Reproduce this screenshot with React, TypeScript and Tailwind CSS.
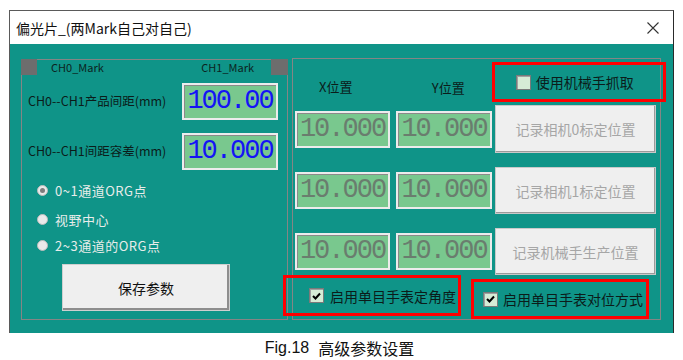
import React from 'react';

const cjk = "font-['Noto_Sans_CJK_SC',sans-serif]";

function NumBox({ value, blue, w }: { value: string; blue?: boolean; w: string }) {
  return (
    <div
      className={`${w} h-[37px] bg-[#79c88e] border-2 border-[#ececec] shadow-[inset_1px_1px_0_#8a8a8a] flex items-center justify-center overflow-hidden font-['Liberation_Mono',monospace] text-[27px] tracking-[-2px] leading-none ${
        blue ? 'text-[#1414f5]' : 'text-[#6a7d6e]'
      }`}
    >
      {value}
    </div>
  );
}

function Radio({ checked, label }: { checked?: boolean; label: string }) {
  return (
    <div className="flex items-center h-[20px] pl-[15px] gap-[7px]">
      <div className="w-[11px] h-[11px] rounded-full bg-[#e9e9e9] border border-[#bdbdbd] flex items-center justify-center">
        {checked && <div className="w-[5px] h-[5px] rounded-full bg-[#7d7d7d]" />}
      </div>
      <span className="text-[13px] leading-none text-[#e8ecea] tracking-[0.5px] whitespace-nowrap">{label}</span>
    </div>
  );
}

function Check({ checked }: { checked?: boolean }) {
  return (
    <div className="shrink-0 w-[15px] h-[15px] bg-[#d6ecd6] border border-[#7a7a7a] shadow-[inset_1px_1px_0_#a0a0a0] flex items-center justify-center">
      {checked && (
        <svg width="9" height="8" viewBox="0 0 9 8">
          <path d="M1 4 L3.5 6.5 L8 1.5" stroke="#000" strokeWidth="2" fill="none" />
        </svg>
      )}
    </div>
  );
}

function GrayButton({ label }: { label: string }) {
  return (
    <div className="w-[161px] h-full bg-[#efefef] border border-[#c9c9c9] shadow-[inset_-1px_-1px_0_#9a9a9a] flex items-center justify-center text-[14px] leading-none text-[#a6a6a6] whitespace-nowrap">
      {label}
    </div>
  );
}

export default function App() {
  return (
    <div className={`w-[683px] h-[360px] bg-white overflow-hidden ${cjk}`}>
      <div className="ml-[9px] mt-[10px] w-[665px] border-x border-t border-[#5a5a5a] border-r-[#2a2a2a]">
        {/* title bar */}
        <div className="h-[33px] bg-white flex items-center justify-between pl-[6px] pr-[14px]">
          <span className="text-[14px] leading-none text-[#111]">偏光片_(两Mark自己对自己)</span>
          <svg width="12" height="12" viewBox="0 0 12 12">
            <path d="M0.5 0.5 L11.5 11.5 M11.5 0.5 L0.5 11.5" stroke="#333" strokeWidth="1.1" />
          </svg>
        </div>

        {/* body */}
        <div className="h-[289px] bg-[#0f9488] flex items-start pl-[11px] pt-[14px] gap-[4px]">
          {/* left group */}
          <div className="mt-[1px] w-[267px] h-[261px] border border-[#858585] flex flex-col">
            <div className="flex items-center h-[16px] -mt-px -mx-px">
              <div className="w-[16px] h-[16px] bg-[#6d6d6d]" />
              <span className="ml-[14px] text-[11px] leading-none text-[#0c2320]">CH0_Mark</span>
              <div className="flex-1" />
              <span className="mr-[17px] text-[11px] leading-none text-[#0c2320]">CH1_Mark</span>
              <div className="w-[17px] h-[16px] bg-[#6d6d6d]" />
            </div>

            <div className="mt-[8px] flex items-center justify-between pl-[6px] pr-[9px]">
              <span className="text-[12.5px] leading-none text-[#0b1c1a] whitespace-nowrap">CH0--CH1产品间距(mm)</span>
              <NumBox value="100.00" blue w="w-[96px]" />
            </div>
            <div className="mt-[13px] flex items-center justify-between pl-[6px] pr-[9px]">
              <span className="text-[12.5px] leading-none text-[#0b1c1a] whitespace-nowrap">CH0--CH1间距容差(mm)</span>
              <NumBox value="10.000" blue w="w-[96px]" />
            </div>

            <div className="mt-[10px] flex flex-col">
              <Radio checked label="0~1通道ORG点" />
              <div className="h-[9px]" />
              <Radio label="视野中心" />
              <div className="h-[6px]" />
              <Radio label="2~3通道的ORG点" />
            </div>

            <div className="mt-[9px] ml-[40px] w-[168px] h-[47px] bg-[#efefef] border border-[#cfcfcf] shadow-[inset_-2px_-2px_0_#8e8e8e] flex items-center justify-center text-[14px] leading-none text-[#111]">
              保存参数
            </div>
          </div>

          {/* right group */}
          <div className="w-[369px] h-[262px] border border-[#858585] flex flex-col">
            <div className="h-[46px] flex items-start">
              <div className="w-[97px] pt-[21px] pl-[26px] text-[13px] leading-none text-[#0b1c1a]">X位置</div>
              <div className="w-[104px] pt-[22px] pl-[43px] text-[13px] leading-none text-[#0b1c1a]">Y位置</div>
              <div className="ml-auto -mr-[6px] mt-[3px] w-[177px] h-[40px] border-[3px] border-[#ff0000] flex items-center pl-[21px] gap-[5px]">
                <Check />
                <span className="text-[14px] leading-none text-[#0b1c1a] whitespace-nowrap">使用机械手抓取</span>
              </div>
            </div>

            <div className="h-[48px] flex items-center pl-[2px]">
              <NumBox value="10.000" w="w-[95px]" />
              <div className="w-[6px]" />
              <NumBox value="10.000" w="w-[96px]" />
              <div className="w-[3px]" />
              <GrayButton label="记录相机0标定位置" />
            </div>
            <div className="mt-[14px] h-[47px] flex items-center pl-[2px]">
              <NumBox value="10.000" w="w-[95px]" />
              <div className="w-[6px]" />
              <NumBox value="10.000" w="w-[96px]" />
              <div className="w-[3px]" />
              <GrayButton label="记录相机1标定位置" />
            </div>
            <div className="mt-[14px] h-[47px] flex items-center pl-[2px]">
              <NumBox value="10.000" w="w-[95px]" />
              <div className="w-[6px]" />
              <NumBox value="10.000" w="w-[96px]" />
              <div className="w-[3px]" />
              <GrayButton label="记录机械手生产位置" />
            </div>

            <div className="flex items-start">
              <div className="shrink-0 -ml-[10px] w-[178px] h-[41px] border-[3px] border-[#ff0000] flex items-center pl-[23px] gap-[6px]">
                <Check checked />
                <span className="text-[14px] leading-none text-[#0b1c1a] whitespace-nowrap">启用单目手表定角度</span>
              </div>
              <div className="shrink-0 ml-[10px] mt-[4px] w-[178px] h-[40px] border-[3px] border-[#ff0000] flex items-center pl-[9px] gap-[5px]">
                <Check checked />
                <span className="text-[14px] leading-none text-[#0b1c1a] whitespace-nowrap">启用单目手表对位方式</span>
              </div>
            </div>
          </div>
        </div>
      </div>

      <div className="mt-[7px] flex items-center justify-center gap-[9px] pr-[4px]">
        <span className="font-['Liberation_Sans',sans-serif] text-[16px] leading-none text-[#111]">Fig.18</span>
        <span className="text-[16px] leading-none text-[#111]">高级参数设置</span>
      </div>
    </div>
  );
}
